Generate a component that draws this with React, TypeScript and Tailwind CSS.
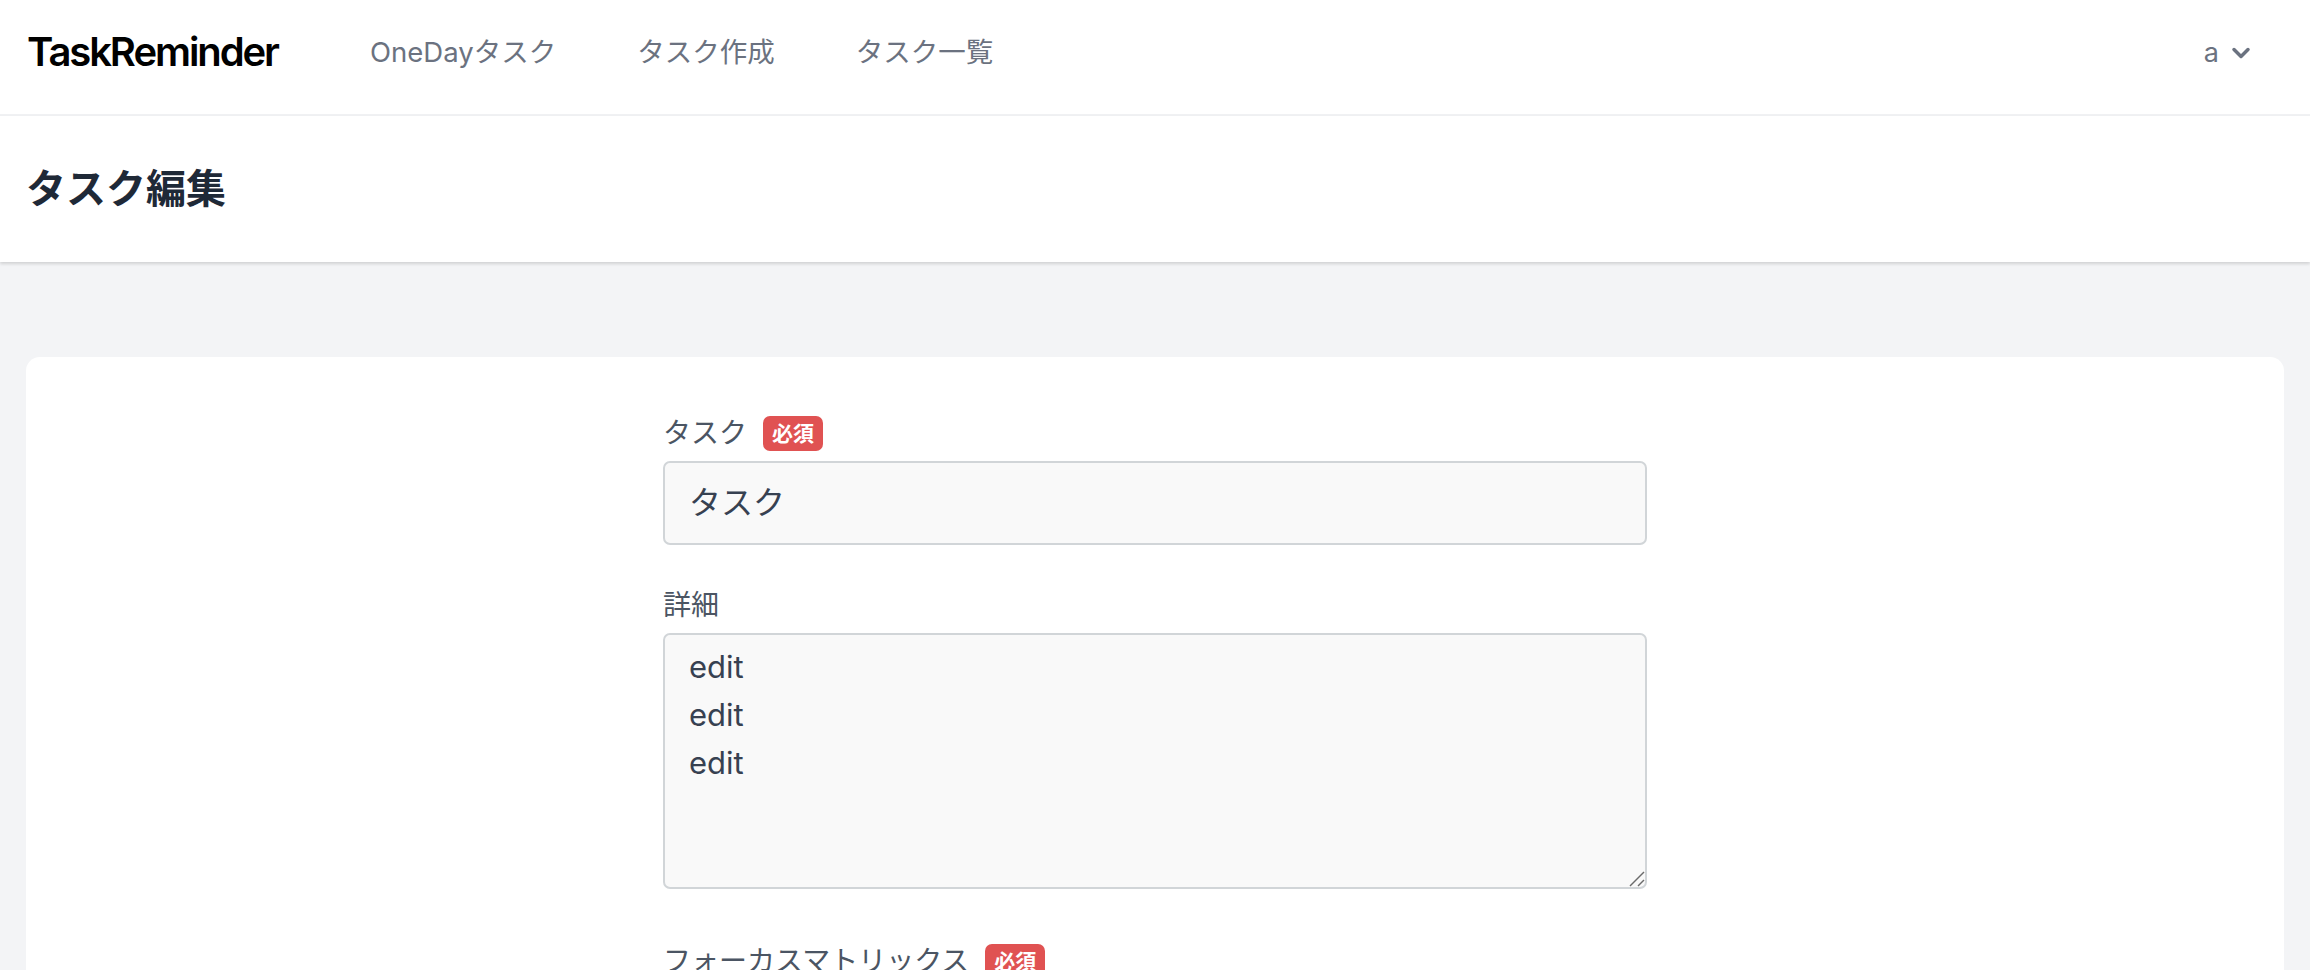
import React from 'react';
import { ChevronDown } from 'lucide-react';

const FONT = "font-['Inter','Noto_Sans_CJK_JP',sans-serif]";

const Badge: React.FC = () => (
  <span className="ml-4 inline-flex h-[35px] w-[60px] items-center justify-center rounded-[7px] bg-[#e05252] text-[21px] leading-none font-bold text-white">
    必須
  </span>
);

export default function App() {
  return (
    <div className={`${FONT} flex h-[970px] flex-col overflow-hidden bg-[#f3f4f6]`}>
      <nav className="flex h-[116px] shrink-0 items-center justify-between border-b-2 border-[#f0f1f3] bg-white pr-[55px] pb-[8px] pl-[27px]">
        <div className="flex items-center">
          <span className="w-[343px] pb-[2px] text-[40px] font-semibold tracking-[-0.052em] text-black">TaskReminder</span>
          <div className="flex items-center gap-[81px] text-[27.5px] text-[#6b7280]">
            <a>OneDayタスク</a>
            <a>タスク作成</a>
            <a>タスク一覧</a>
          </div>
        </div>
        <div className="flex items-center gap-[8px] text-[27px] text-[#6b7280]">
          <span>a</span>
          <ChevronDown className="h-[28px] w-[28px]" strokeWidth={3} />
        </div>
      </nav>

      <header className="flex h-[146px] shrink-0 items-center bg-white pl-[26px] shadow-[0_2px_3px_rgba(0,0,0,0.14)]">
        <h2 className="text-[40px] font-bold text-[#1f2937]">タスク編集</h2>
      </header>

      <main className="px-[26px] pt-[95px]">
        <div className="flex justify-center rounded-t-[14px] bg-white pt-[53px] pb-[200px]">
          <form className="w-[984px]">
            <label className="flex h-[46px] items-center text-[28px] text-[#4b5563]">
              タスク
              <Badge />
            </label>
            <input
              readOnly
              value="タスク"
              className="mt-[5px] block h-[84px] w-full rounded-[7px] border-2 border-[#d1d5d8] bg-[#f9f9f9] px-[24px] pb-[6px] text-[32px] text-[#374151] outline-none"
            />
            <label className="mt-[37px] flex h-[46px] items-center text-[28px] text-[#4b5563]">詳細</label>
            <div className="relative mt-[5px]">
              <textarea
                readOnly
                value={'edit\nedit\nedit'}
                className="block h-[256px] w-full resize-none rounded-[7px] border-2 border-[#d1d5d8] bg-[#f9f9f9] px-[24px] pt-[8px] text-[31px] leading-[48px] text-[#374151] outline-none"
              />
              <svg className="absolute right-[2px] bottom-[2px] h-[16px] w-[16px]" viewBox="0 0 16 16" fill="none" stroke="#6b6b6b" strokeWidth="1.5">
                <path d="M1 15 15 1" />
                <path d="M9 15 15 9" />
              </svg>
            </div>
            <label className="mt-[49px] flex h-[46px] items-center text-[28px] text-[#4b5563]">
              フォーカスマトリックス
              <Badge />
            </label>
          </form>
        </div>
      </main>
    </div>
  );
}
